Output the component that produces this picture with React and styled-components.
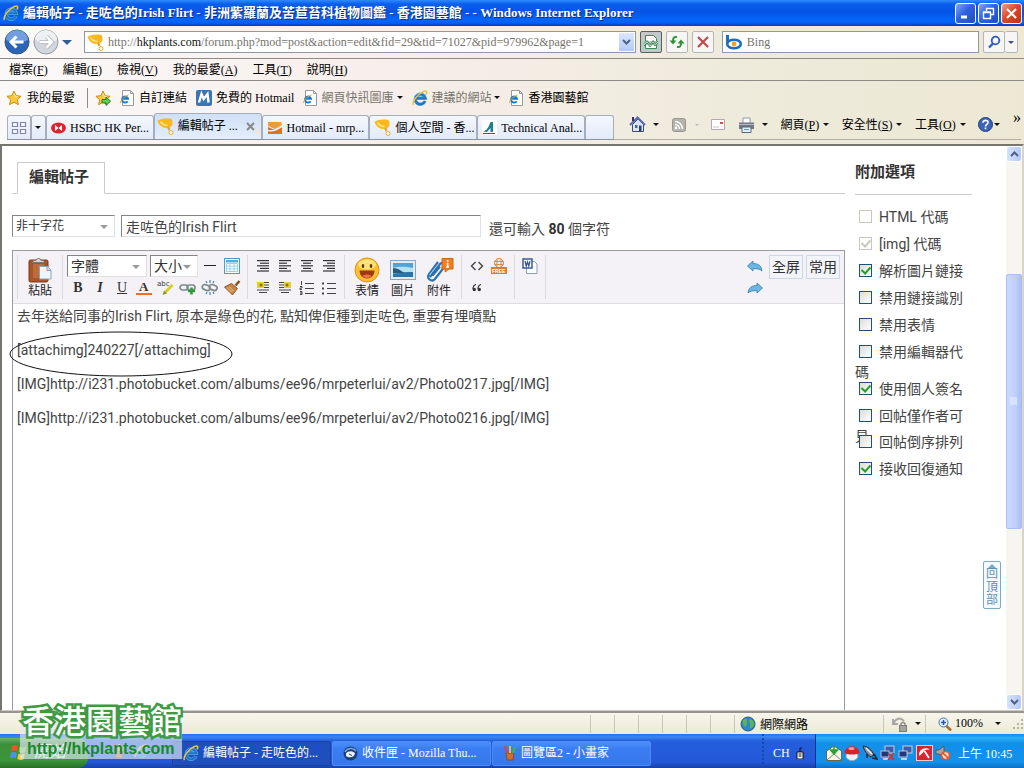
import React from 'react';
import styled, { createGlobalStyle, css } from 'styled-components';

const uiFont = "'Liberation Serif', 'Noto Sans CJK TC', serif";
const pageFont = "Roboto, 'Noto Sans CJK TC', sans-serif";

const GlobalStyle = createGlobalStyle`
  * { box-sizing: border-box; }
  body { margin: 0; font-family: ${uiFont}; font-size: 12px; color: #000; }
  button, input, select, textarea { font: inherit; color: inherit; margin: 0; }
  svg { display: block; flex: none; }
`;

const Desktop = styled.div`
  position: relative;
  min-height: 100vh;
  display: flex;
  flex-direction: column;
  overflow: hidden;
`;

// ---------- title bar ----------
const TitleBar = styled.header`
  height: 26px;
  display: flex;
  align-items: center;
  gap: 4px;
  padding: 0 2px 0 3px;
  background: linear-gradient(180deg, #2f8bff 0, #0b5fec 4px, #0453e4 12px, #0566fb 20px, #0560f3 23px, #0238b4 26px);
`;

const Title = styled.h1`
  flex: 1;
  margin: 0;
  font-size: 13px;
  line-height: 20px;
  font-weight: bold;
  color: #fff;
  text-shadow: 1px 1px 0 #0a2a7a;
  white-space: nowrap;
  overflow: hidden;
`;

const WindowButtons = styled.div`
  display: flex;
  gap: 2px;
`;

const WindowButton = styled.button`
  width: 21px;
  height: 21px;
  padding: 0;
  display: grid;
  place-items: center;
  border: 1px solid #fff;
  border-radius: 3px;
  background: ${props => (props.$close
    ? 'linear-gradient(135deg, #f0a088, #e0482a 45%, #c2300f)'
    : 'linear-gradient(135deg, #7fa8f5, #2f62e0 45%, #1f4bc8)')};
`;

// ---------- navigation ----------
const barBackground = 'linear-gradient(90deg, #fbf9f8 0, #f7efec 35%, #efebdc 70%, #ece8d4 100%)';

const NavBar = styled.nav`
  height: 33px;
  display: flex;
  align-items: center;
  gap: 4px;
  padding: 0 6px 0 4px;
  background: ${barBackground};
  border-bottom: 1px solid #8d8b85;
`;

const RoundButtons = styled.div`
  display: flex;
  align-items: center;
  gap: 3px;
  width: 76px;
`;

const PlainButton = styled.button`
  padding: 0;
  border: 0;
  background: none;
  display: inline-flex;
  align-items: center;
  justify-content: center;
  gap: ${props => props.$gap || 0}px;
  white-space: nowrap;
  line-height: 16px;
  color: ${props => props.$color || 'inherit'};
`;

const FieldBox = styled.div`
  flex: ${props => props.$grow} 1 0;
  min-width: 0;
  height: 22px;
  display: flex;
  align-items: center;
  gap: 4px;
  padding: 0 1px 0 2px;
  margin-left: ${props => props.$before || 0}px;
  background: #fff;
  border: 1px solid #8a99ab;
`;

const AddressText = styled.div`
  flex: 1;
  color: #77736c;
  line-height: 18px;
  white-space: nowrap;
  overflow: hidden;
  b { color: #111; font-weight: normal; }
`;

const SearchInput = styled.input`
  flex: 1;
  min-width: 0;
  border: 0;
  padding: 0;
  background: none;
  outline: 0;
  &::placeholder { color: #77736c; opacity: 1; }
`;

const DropButton = styled(PlainButton)`
  width: 15px;
  height: 18px;
  background: linear-gradient(180deg, #dce7fc, #b3c9f5);
`;

const SquareButton = styled(PlainButton)`
  width: ${props => props.$w || 22}px;
  height: 22px;
  border: 1px solid ${props => (props.$pressed ? '#56605c' : '#b3b6bd')};
  border-radius: 2px;
  background: ${props => (props.$pressed ? '#bccbca' : '#f7f6f4')};
`;

const Joined = styled.div`
  display: flex;
  button + button { border-left: 0; }
`;

const MenuBar = styled.div`
  height: 22px;
  display: flex;
  align-items: center;
  gap: 15px;
  padding: 0 9px;
  background: ${barBackground};
  border-bottom: 1px solid #8d8b85;
`;

const FavoritesBar = styled.div`
  height: 33px;
  display: flex;
  align-items: center;
  gap: 9px;
  padding: 0 6px;
  background: ${barBackground};
`;

const FavoritesSplit = styled.i`
  height: 20px;
  margin: 0 -2px 0 3px;
  border-left: 1px solid #908e88;
`;

// ---------- tabs and commands ----------
const TabBar = styled.div`
  display: flex;
  height: 30px;
  padding: 0 3px 4px 7px;
  background: ${barBackground};
`;

const Tabs = styled.div`
  flex: 1 1 607px;
  min-width: 0;
  display: flex;
  align-items: flex-end;
  border-bottom: 1px solid #8d949e;
`;

const tabEdge = css`
  border: 1px solid #a6aebb;
  border-bottom: 0;
  border-radius: 3px 3px 0 0;
  background: linear-gradient(180deg, #f4f7fd, #e2eafa);
`;

const Tab = styled.button`
  ${tabEdge}
  flex: ${props => (props.$small ? `0 0 ${props.$small}px` : '0 1 108px')};
  min-width: 0;
  height: 24px;
  padding: 0 ${props => (props.$small ? 3 : 4)}px;
  display: flex;
  align-items: center;
  gap: 4px;
  text-align: left;
  white-space: nowrap;
  ${props => props.$active && css`
    height: 26px;
    padding: 0 6px 1px 2px;
    background: linear-gradient(180deg, #cfe0f8, #e4eefb);
  `}
`;

const TabLabel = styled.span`
  flex: 1;
  line-height: 16px;
`;

const Commands = styled.div`
  flex: 0 1 407px;
  display: flex;
  align-items: center;
  justify-content: space-between;
  padding: 0 0 4px 15px;
  border-bottom: 1px solid #b0aea6;
`;

const More = styled.button`
  align-self: flex-start;
  padding: 0;
  border: 0;
  background: none;
  font-size: 16px;
  line-height: 8px;
`;

// ---------- forum page ----------
const Viewport = styled.div`
  flex: 1;
  position: relative;
  display: flex;
  background: #fff;
  border: 2px solid #77756f;
  border-right-color: #d8d5c8;
  border-bottom: 1px solid #d0cdc0;
  font-family: ${pageFont};
  color: #444;
`;

const Page = styled.main`
  flex: 1;
  min-width: 0;
  display: flex;
  gap: 10px;
  padding: 0 34px 0 10px;
`;

const MainColumn = styled.div`
  flex: 1;
  min-width: 0;
  display: flex;
  flex-direction: column;
`;

const PageTabs = styled.div`
  display: flex;
  padding: 16px 0 0 5px;
  background: linear-gradient(#ccc, #ccc) 0 100% / 100% 1px no-repeat;
`;

const PageTab = styled.h2`
  margin: 0;
  padding: 4px 15px 6px 11px;
  border: 1px solid #ccc;
  border-bottom-color: #fff;
  background: #fff;
  font-size: 15px;
  line-height: 20px;
  color: #333;
`;

const TitleRow = styled.div`
  display: flex;
  align-items: center;
  gap: 6px;
  margin: 21px 0 13px;
  font-size: 14px;
`;

const sunken = css`
  border: 1px solid;
  border-color: #848484 #e0e0e0 #e0e0e0 #848484;
  background: #fff;
`;

const SelectWrap = styled.label`
  position: relative;
  display: block;
  width: ${props => props.$w}px;
  svg {
    position: absolute;
    right: 7px;
    top: 10px;
    pointer-events: none;
  }
`;

const Select = styled.select`
  ${sunken}
  appearance: none;
  display: block;
  width: 100%;
  height: 22px;
  padding: 0 3px;
  border-radius: 0;
  font-size: ${props => props.$size}px;
  color: #333;
`;

const SubjectInput = styled.input`
  ${sunken}
  flex: 0 1 360px;
  min-width: 0;
  height: 22px;
  padding: 0 4px;
`;

const Remaining = styled.span`
  padding: 3px 0 0 2px;
  margin-bottom: -3px;
  line-height: 17px;
  b { color: #333; }
`;

const Editor = styled.section`
  flex: 1;
  display: flex;
  flex-direction: column;
  border: 1px solid #9a9aa2;
  border-bottom: 0;
`;

const Toolbar = styled.div`
  display: flex;
  padding: 4px;
  background: #f5f2f7;
  border-bottom: 1px solid #ddd;
`;

const ToolGroup = styled.div`
  display: flex;
  flex-wrap: wrap;
  align-content: flex-start;
  width: ${props => props.$w}px;
  height: 44px;
  padding: 0 4px;
  border-left: 1px solid #dcdae0;
`;

const ToolRow = styled.div`
  display: flex;
  align-items: center;
  height: 22px;
`;

const ToolButton = styled.button`
  width: 22px;
  height: 22px;
  padding: 0;
  border: 0;
  background: none;
  display: grid;
  place-items: center;
  color: #333;
  font-family: 'Liberation Serif', serif;
  font-size: 14px;
  line-height: 16px;
`;

const BigTool = styled.button`
  width: 36px;
  height: 44px;
  padding: 2px 0 0;
  border: 0;
  background: none;
  display: flex;
  flex-direction: column;
  align-items: center;
  font-size: 12px;
  line-height: 16px;
  color: #222;
`;

const Spacer = styled.span`
  width: ${props => props.$w}px;
`;

const ToolEnd = styled.div`
  flex: 1;
  display: flex;
  justify-content: flex-end;
  align-items: flex-start;
  border-left: 1px solid #dcdae0;
`;

const ModeButton = styled.button`
  width: 34px;
  height: 24px;
  margin-left: 3px;
  padding: 0;
  border: 1px solid #c9d9ea;
  background: #f2f4fa;
  font-size: 14px;
  line-height: 18px;
  color: #333;
`;

const TextWrap = styled.div`
  flex: 1;
  position: relative;
  display: flex;
`;

const TextArea = styled.textarea`
  flex: 1;
  border: 0;
  outline: 0;
  resize: none;
  overflow: hidden;
  padding: 4px;
  font-size: 14px;
  line-height: 17px;
  background: #fff;
`;

// hand drawn ring around the attachment code
const Ring = styled.svg`
  position: absolute;
  left: -4px;
  top: 27px;
  pointer-events: none;
`;

const Sidebar = styled.aside`
  width: 117px;
`;

const SideTitle = styled.h2`
  margin: 0;
  padding: 15px 0 11px;
  border-bottom: 1px solid #ccc;
  font-size: 15px;
  line-height: 22px;
  color: #333;
`;

const Options = styled.ul`
  list-style: none;
  margin: 12px 0 0;
  padding: 0;
  font-size: 14px;
  line-height: 20px;
`;

const Option = styled.li`
  margin-bottom: ${props => props.$after}px;
`;

const Check = styled.input`
  appearance: none;
  position: relative;
  z-index: 1;
  width: 13px;
  height: 13px;
  margin: 0 7px 0 4px;
  vertical-align: -1px;
  border: 1px solid #1c5180;
  background: linear-gradient(135deg, #dcdcd7, #fff);
  &:checked::after {
    content: '';
    display: block;
    width: 4px;
    height: 7px;
    margin: 0 auto;
    border: solid #21a121;
    border-width: 0 2px 2px 0;
    transform: rotate(42deg);
  }
  &:disabled { border-color: #cac8bb; background: #fff; }
  &:disabled::after { border-color: #cac8bb; }
`;

const ToTop = styled.a`
  position: absolute;
  right: 21px;
  bottom: 101px;
  width: 18px;
  padding: 2px 0 1px;
  display: flex;
  flex-direction: column;
  align-items: center;
  border: 1px solid #7ba9c8;
  border-radius: 2px;
  background: #f5fafe;
  color: #5b93b8;
  font-size: 12px;
  line-height: 13px;
  text-align: center;
  text-decoration: none;
`;

const ToTopText = styled.span`
  width: 12px;
`;

const Scrollbar = styled.div`
  width: 16px;
  display: flex;
  flex-direction: column;
  background: #f6f5ef;
`;

const ScrollButton = styled.button`
  height: 16px;
  padding: 0;
  display: grid;
  place-items: center;
  border: 1px solid #fff;
  border-radius: 3px;
  background: linear-gradient(90deg, #d6e2fd, #b6caf7);
`;

const ScrollTrack = styled.div`
  flex: 1;
  display: flex;
  flex-direction: column;
`;

const ScrollThumb = styled.div`
  flex: 0 0 48%;
  display: grid;
  place-items: center;
  border: 1px solid #a9bff0;
  border-radius: 2px;
  background: linear-gradient(90deg, #cbdafd, #c0d0fb 60%, #a9bff5);
`;

// ---------- status bar ----------
const StatusBar = styled.footer`
  height: 23px;
  display: flex;
  align-items: center;
  background: linear-gradient(180deg, #f8f6ec, #ece9d8);
  border-top: 2px solid #96948c;
`;

const StatusCell = styled.div`
  display: flex;
  align-items: center;
  gap: ${props => props.$gap || 4}px;
  flex: none;
  width: ${props => props.$w}px;
  height: 18px;
  padding-left: ${props => props.$pad || 0}px;
  border-left: 1px solid #c9c6b8;
`;

// ---------- taskbar ----------
const TaskBar = styled.footer`
  height: 34px;
  display: flex;
  align-items: stretch;
  background: linear-gradient(180deg, #2c6fe8 0, #3b86f2 3px, #245edc 7px, #2359d8 28px, #1941a5 34px);
  color: #fff;
`;

const StartButton = styled.button`
  width: 88px;
  margin-top: 4px;
  padding: 0 0 2px 10px;
  display: flex;
  align-items: center;
  gap: 6px;
  border: 0;
  border-radius: 0 10px 10px 0;
  background: linear-gradient(180deg, #6db465, #3c9038 20%, #3a963a 75%, #2a6f2a);
  color: #fff;
  font-size: 16px;
  line-height: 20px;
  font-style: italic;
`;

const QuickLaunch = styled.div`
  width: 84px;
  display: flex;
  align-items: center;
  justify-content: center;
  gap: 8px;
`;

const Tasks = styled.div`
  flex: 1;
  min-width: 0;
  display: flex;
  align-items: center;
  gap: 1px;
  padding-top: 4px;
`;

const Task = styled.button`
  flex: 0 1 159px;
  min-width: 0;
  height: 25px;
  padding: 0 10px;
  display: flex;
  align-items: center;
  gap: 4px;
  border: 1px solid ${props => (props.$active ? '#1a429e' : '#4d8df8')};
  border-radius: 2px;
  background: ${props => (props.$active ? '#1e4fbc' : 'linear-gradient(180deg, #4c8ffa, #3a7df2 30%, #3877ec)')};
  white-space: nowrap;
  line-height: 16px;
`;

const Language = styled.div`
  width: 53px;
  display: flex;
  align-items: center;
  gap: 6px;
  padding: 4px 0 0 9px;
  border-left: 2px dotted #1846b0;
`;

const Tray = styled.div`
  width: 209px;
  display: flex;
  align-items: center;
  gap: 2px;
  padding: 4px 0 0 10px;
  border-left: 1px solid #10308c;
  background: linear-gradient(180deg, #0c8ce8 0, #2cb0f8 4px, #1290e9 9px, #1390ea 28px, #0f6fc4 34px);
`;

const Clock = styled.time`
  margin-left: 5px;
  white-space: nowrap;
`;

const Watermark = styled.div`
  position: absolute;
  left: 20px;
  bottom: 9px;
  padding: 0 0 1px 2px;
  background: linear-gradient(180deg, transparent 8px, rgba(225, 232, 246, 0.65) 8px);
  pointer-events: none;
`;

const WatermarkName = styled.div`
  font-size: 32px;
  font-weight: 500;
  line-height: 36px;
  color: #fff;
  -webkit-text-stroke: 5px #3f9a43;
  paint-order: stroke fill;
`;

const WatermarkUrl = styled.div`
  padding-left: 5px;
  font-family: 'Liberation Sans', sans-serif;
  font-size: 16px;
  font-weight: bold;
  line-height: 18px;
  color: #168a28;
`;

// ---------- icons ----------
const Svg = ({ w = 16, h = w, box, children }) => (
  <svg width={w} height={h} viewBox={box || `0 0 ${w} ${h}`} fill="none" aria-hidden="true">{children}</svg>
);

const Caret = ({ color = '#111', w = 6, up }) => (
  <Svg w={w} h={w / 2} box="0 0 6 3"><path d={up ? 'M0 3h6L3 0z' : 'M0 0h6L3 3z'} fill={color} /></Svg>
);

const SelectCaret = () => (
  <Svg w={8} h={4}><path d="M0 0h8L4 4z" fill="#999" /></Svg>
);

const Chevron = ({ up, color = '#4d6185' }) => (
  <Svg w={9} h={6}><path d={up ? 'M1 5l3.500-3.500L8 5' : 'M1 1l3.500 3.500L8 1'} stroke={color} strokeWidth="2" /></Svg>
);

const IeIcon = ({ w = 16 }) => (
  <Svg w={w} box="0 0 16 16">
    <path d="M13 11A5 5 0 1 1 13.200 8.200H4.500" stroke="#4fa8ea" strokeWidth="3.400" />
    <path d="M13 11A5 5 0 1 1 13.200 8.200H4.500" stroke="#1f74c4" strokeWidth="2" />
    <path d="M1.500 15C-.5 12 6 3.500 11.500 1.400c3-1.100 4 .4 2.500 3" stroke="#f0c040" strokeWidth="1.600" />
  </Svg>
);

const IePage = () => (
  <Svg w={14} h={16}>
    <path d="M2.500.5h8l3 3v12h-11z" fill="#fff" stroke="#999" />
    <path d="M10.500.5v3h3" stroke="#999" />
    <path d="M7.600 11.200A3 3 0 1 1 8 8.800H2.500" stroke="#1f78c8" strokeWidth="2" />
    <path d="M.6 13C0 11 4 6.500 8.500 5" stroke="#e0a92c" />
  </Svg>
);

const TrophyIcon = () => (
  <Svg w={17} h={17}>
    <path d="M.5 3C4 .5 9 0 14.500 1c2.500 4 .5 8-3 9C7 10.500 2.500 8.500.5 3z" fill="#f9b81c" />
    <path d="M3.500 3.500c2 3 4 4 7 4" stroke="#ffe38a" strokeWidth="1.500" />
    <path d="M11 9l1.500 3" stroke="#e8a020" strokeWidth="2" />
    <circle cx="14" cy="14.500" r="2" fill="#fff" stroke="#f0a81c" />
  </Svg>
);

const BackIcon = () => (
  <Svg w={26}>
    <circle cx="13" cy="13" r="12" fill="#2a65b8" stroke="#38527c" />
    <path d="M2 11a11 10 0 0 1 22 0c-6 3-16 3-22 0z" fill="#6f9fdc" />
    <path d="M12.500 7.500L7 13l5.500 5.500M7 13h12.500" stroke="#fff" strokeWidth="3" />
  </Svg>
);

const ForwardIcon = () => (
  <Svg w={26}>
    <circle cx="13" cy="13" r="12" fill="#d2d6dd" stroke="#959ba5" />
    <path d="M2 11a11 10 0 0 1 22 0c-6 3-16 3-22 0z" fill="#eef0f4" />
    <path d="M13.500 7.500L19 13l-5.500 5.500M19 13H6.500" stroke="#a9adb6" strokeWidth="4" />
    <path d="M13.500 7.500L19 13l-5.500 5.500M19 13H6.500" stroke="#fff" strokeWidth="2.600" />
  </Svg>
);

const CompatIcon = () => (
  <Svg w={16}>
    <path d="M2.500 7V1.500h8l3 3V7M2.500 11v3.500h11V11" fill="#fff" stroke="#3d8a4c" />
    <path d="M1 9.500l3-3 3 4 3-4 2 3 3-2.500M1 12l3-3 3 4 3-4 2 3 3-2.500" stroke="#3d8a4c" />
  </Svg>
);

const RefreshIcon = () => (
  <Svg w={16}>
    <path d="M8 3C5 2.500 4 4 4 7" stroke="#2f9438" strokeWidth="2" />
    <path d="M.5 6.500h7L4 10.500z" fill="#2f9438" />
    <path d="M8 13c3 .5 4-1 4-4" stroke="#2f9438" strokeWidth="2" />
    <path d="M8.500 9.500h7L12 5.500z" fill="#2f9438" />
  </Svg>
);

const StopIcon = () => (
  <Svg w={14}><path d="M2 2l10 10M12 2L2 12" stroke="#c04a48" strokeWidth="2.200" /></Svg>
);

const BingIcon = () => (
  <Svg w={18} h={16}>
    <path d="M2.500 1v9.500" stroke="#1c6fc0" strokeWidth="3" />
    <ellipse cx="9" cy="10" rx="6.800" ry="4.300" fill="#fff" stroke="#1c6fc0" strokeWidth="2.600" />
    <circle cx="9" cy="10" r="2.400" fill="#f0a020" />
  </Svg>
);

const SearchIcon = () => (
  <Svg w={14}>
    <circle cx="8.500" cy="5.500" r="3.800" stroke="#2c5cc5" strokeWidth="1.800" />
    <path d="M6 8.500L2 12.500" stroke="#2c5cc5" strokeWidth="2.400" />
  </Svg>
);

const StarIcon = ({ add }) => (
  <Svg w={16}>
    <path d="M8 1l2.100 4.700 5 .6-3.700 3.400 1 5L8 12.200 3.600 14.700l1-5L.9 6.300l5-.6z" fill="#ffc93a" stroke="#c98a1a" />
    <path d="M8 3.500l1.500 3 2.500.3" stroke="#fff0a8" />
    {add && <path d="M7 9.500h4v-2.500l4.500 4.200-4.500 4.200v-2.500H7z" fill="#5fd04a" stroke="#207a28" />}
  </Svg>
);

const MsnIcon = () => (
  <Svg w={16}>
    <rect width="16" height="16" rx="2" fill="#3a76b4" />
    <path d="M3 12.500L5.500 4l2.200 5L11.500 4l1 8.500" stroke="#fff" strokeWidth="2.400" />
  </Svg>
);

const QuickTabsIcon = () => (
  <Svg w={16} h={14}>
    <path d="M1.500 1.500h5v4h-5zM9.500 1.500h5v4h-5zM1.500 8.500h5v4h-5zM9.500 8.500h5v4h-5z" fill="#f6f8fd" stroke="#7d88a8" strokeWidth="1.200" />
  </Svg>
);

const HsbcIcon = () => (
  <Svg w={15} h={12}>
    <ellipse cx="7.500" cy="6" rx="7.500" ry="5.500" fill="#dd2530" />
    <path d="M4 3v6l3.500-3zM11 3v6L7.500 6z" fill="#fff" />
    <path d="M5 3h5L7.500 5zM5 9h5L7.500 7z" fill="#dd2530" />
  </Svg>
);

const HotmailIcon = () => (
  <Svg w={16} h={14}>
    <path d="M1 1h13l1 3-7 4-7-3z" fill="#f19a3c" />
    <path d="M1 6l7 3 7-4v8H1z" fill="#e2711c" />
    <path d="M0 9.500c5 1.500 9 0 15-4" stroke="#fff" strokeWidth="1.200" />
  </Svg>
);

const ChartIcon = () => (
  <Svg w={15} h={15}>
    <rect width="15" height="15" fill="#fff" />
    <path d="M1 11.500C5 11 7 6 8.500 2H11v10H8.500V8L5 12z" fill="#1f7f8c" />
    <path d="M1 13.500h12" stroke="#2a5a9a" />
  </Svg>
);

const HomeIcon = () => (
  <Svg w={17} h={17}>
    <path d="M3.500 8.500v7h11v-7L9 3z" fill="#dce5f6" stroke="#3e4a78" />
    <path d="M1 9l7.500-7.500L16 9" stroke="#5a6cae" strokeWidth="2" />
    <path d="M3 1h2v4H3z" fill="#3a2a7a" />
    <path d="M6 9h2.500v3H6z" fill="#4a64a8" />
    <path d="M10 9.500h2.500v6H10z" fill="#2f3e70" />
  </Svg>
);

const RssIcon = () => (
  <Svg w={14}>
    <rect x=".5" y=".5" width="13" height="13" rx="2" fill="#b4b2ac" stroke="#98968f" />
    <circle cx="4" cy="10" r="1.400" fill="#fff" />
    <path d="M3 6.500A4.500 4.500 0 0 1 7.500 11M3 3.500A7.500 7.500 0 0 1 10.500 11" stroke="#fff" strokeWidth="1.400" />
  </Svg>
);

const MailIcon = () => (
  <Svg w={14} h={11}>
    <path d="M.5.5h13v10H.5z" fill="#fff" stroke="#b8a8ae" />
    <path d="M9 3h3v2H9z" fill="#d44a50" />
    <path d="M2 8h6" stroke="#c9c3cf" />
  </Svg>
);

const PrinterIcon = () => (
  <Svg w={17} h={16}>
    <path d="M5 6V1h7v5" fill="#fff" stroke="#8a9ab0" />
    <path d="M1 5.500h15V12H1z" fill="#747884" />
    <path d="M1 7.500h15" stroke="#b8bcc6" />
    <path d="M4 10h9v5.500H4z" fill="#e4f0fb" stroke="#5c6678" />
    <path d="M6 12.500h5" stroke="#5a9ad0" />
  </Svg>
);

const HelpIcon = () => (
  <Svg w={15}>
    <circle cx="7.500" cy="7.500" r="7" fill="#3a62b8" stroke="#22407c" />
    <path d="M5 5.800c0-3.200 5-3 5-.2 0 1.800-2.500 1.700-2.500 3.800M7.500 10.500v1.800" stroke="#fff" strokeWidth="1.700" />
  </Svg>
);

const PasteIcon = () => (
  <Svg w={24} h={26}>
    <rect x="1" y="3" width="19" height="22" rx="1.500" fill="#a9552a" stroke="#7d3a18" />
    <path d="M5 7h11v14H5z" fill="#bd6d3d" />
    <path d="M5 5.500h11v-2h-3a2.500 2 0 0 0-5 0H5z" fill="#d8d8d8" stroke="#777" />
    <path d="M11.500 9.500h8l3.500 3.500v9H11.500z" fill="#edf6fc" stroke="#8aa5ba" />
    <path d="M19 9.500v4h4" fill="#c5dcec" stroke="#8aa5ba" />
  </Svg>
);

const SmileIcon = () => (
  <Svg w={26}>
    <circle cx="13" cy="13" r="12" fill="#fcbf2e" stroke="#dc9310" />
    <ellipse cx="13" cy="7.500" rx="9" ry="5" fill="#ffe27a" />
    <ellipse cx="9" cy="9" rx="1.300" ry="2" fill="#5a3208" />
    <ellipse cx="17" cy="9" rx="1.300" ry="2" fill="#5a3208" />
    <path d="M5.500 13.500h15a7.500 8 0 0 1-15 0z" fill="#9c3812" />
    <path d="M8.500 19c2.500-2 6.500-2 9 0-2 2.500-7 2.500-9 0z" fill="#ee7048" />
  </Svg>
);

const PictureIcon = () => (
  <Svg w={26}>
    <rect x=".5" y="3.500" width="25" height="19" fill="#e2ecf4" stroke="#86a8c2" />
    <rect x="3" y="6" width="20" height="14" fill="#4fa3d8" />
    <path d="M3 11c7-2 13-1 20 0v4H3z" fill="#b5e2f1" />
    <path d="M3 11c5 0 8 3 12 5H3z" fill="#27597a" />
    <path d="M3 17c8-1 13-2 20-2v5H3z" fill="#2a74a8" />
  </Svg>
);

const AttachIcon = () => (
  <Svg w={30} h={26}>
    <path d="M6 20L16 7c2-2.500 6 .5 4 3.300L11 22c-3 3.500-9 0-6-5L14 5M8.500 18.500l7.500-9" stroke="#2a71ad" strokeWidth="2.200" />
    <path d="M5.500 18L15 6" stroke="#9cccec" />
    <path d="M18 1.500h11v10.500H25l-4 3 .5-3H18z" fill="#ee7f22" stroke="#d0650e" />
    <path d="M23.600 3v1.600M23.600 5.800V10M22.300 10h2.800" stroke="#fff" strokeWidth="1.600" />
  </Svg>
);

const TableIcon = () => (
  <Svg w={16}>
    <rect x=".5" y=".5" width="15" height="15" fill="#fff" stroke="#3f9fd0" />
    <path d="M2 2h12v2.500H2z" fill="#4fb0de" />
    <path d="M2.500 5.500h11v8h-11zM2.500 8.200h11M2.500 10.800h11M6 5v9M10 5v9" stroke="#9ad4ec" />
  </Svg>
);

const HighlightIcon = () => (
  <Svg w={18} h={16}>
    <text x="0" y="6" fontSize="7" fontFamily="DejaVu Sans" fill="#333">abc</text>
    <path d="M15.500 5L8 12.500" stroke="#d9d01c" strokeWidth="3" />
    <path d="M7 10.500l3 3-4.500 1.500z" fill="#8f9a20" />
  </Svg>
);

const LinkIcon = ({ broken }) => (
  <Svg w={18} h={16}>
    <rect x="1" y="5" width="8" height="5" rx="2.500" stroke="#7c8a8c" strokeWidth="1.700" transform={broken ? 'rotate(20 5 8)' : undefined} />
    <rect x="8" y="5" width="8" height="5" rx="2.500" stroke="#7c8a8c" strokeWidth="1.700" transform={broken ? 'rotate(20 12 8)' : undefined} />
    {broken
      ? <path d="M9 0v3M5 1l1 2M13 1l-1 2M9 12v3M5 14l1-2M13 14l-1-2" stroke="#4a82b8" strokeWidth="1.200" />
      : <path d="M12.500 7.500v7M9 11h7" stroke="#2f9c35" strokeWidth="2.600" />}
  </Svg>
);

const BrushIcon = () => (
  <Svg w={18} h={16}>
    <path d="M16.500 1l-4 4.500" stroke="#8b4f20" strokeWidth="2.500" />
    <path d="M8.500 3.500l6 5-5 6.500L1.500 7z" fill="#c48544" stroke="#8c5a2c" />
    <path d="M4 7.500l5 5M6 6.500l5 5" stroke="#ecc690" />
  </Svg>
);

const alignRows = {
  full: [[2, 12], [5, 9], [2, 12], [5, 9], [2, 12]],
  left: [[2, 12], [2, 8], [2, 12], [2, 8], [2, 12]],
  center: [[2, 12], [4, 8], [2, 12], [4, 8], [2, 12]],
  right: [[2, 12], [6, 8], [2, 12], [6, 8], [2, 12]],
};

const AlignIcon = ({ kind }) => (
  <Svg w={16}>
    {alignRows[kind].map(([x, w], i) => (
      <rect key={i} x={x} y={2 + i * 2.6} width={w} height="1.200" fill="#333" />
    ))}
  </Svg>
);

const FloatIcon = ({ right }) => (
  <Svg w={16}>
    <path d="M2 2.500h12M2 5h12M2 7.500h12M2 10h12M4 12.500h8" stroke="#444" />
    <rect x={right ? 7 : 2} y="2" width="7" height="6" fill="#e4d02a" />
    <circle cx={right ? 10 : 6} cy="5" r="1.500" fill="#8a7410" />
  </Svg>
);

const ListIcon = ({ numbered }) => (
  <Svg w={16}>
    <path d="M6 3.500h9M6 8.500h9M6 13.500h9" stroke="#444" />
    {numbered
      ? <path d="M2.500 1v4M1 6.500h2v1.500H1v1.500h2M1 11.500h2v3H1M1 13h2" stroke="#444" />
      : <path d="M1 2.500h2v2H1zM1 7.500h2v2H1zM1 12.500h2v2H1z" fill="#444" />}
  </Svg>
);

const CodeIcon = () => (
  <Svg w={14}><path d="M5.500 3L1.500 7l4 4M8.500 3l4 4-4 4" stroke="#444" strokeWidth="1.400" /></Svg>
);

const FreeIcon = () => (
  <Svg w={16} h={17}>
    <circle cx="8" cy="5" r="4.500" stroke="#d48a48" />
    <path d="M3.500 3.500h9M3.500 6.500h9M6 1v8M10 1v8" stroke="#d48a48" />
    <rect x="0" y="9" width="16" height="7" fill="#d67e32" />
    <text x="1" y="15" fontSize="5" fontWeight="bold" fontFamily="Liberation Sans" fill="#fff">FREE</text>
  </Svg>
);

const WordIcon = () => (
  <Svg w={16}>
    <path d="M4.500 3.500h8l2.500 2.500v9.500H4.500z" fill="#fff" stroke="#8a9cba" />
    <rect x="1" y="1" width="9" height="9" fill="#fff" stroke="#2d4f9c" strokeWidth="1.400" />
    <path d="M3 3l1.200 5 1.300-4 1.300 4L8 3" stroke="#2d4f9c" strokeWidth="1.200" />
  </Svg>
);

const UndoIcon = ({ redo }) => (
  <Svg w={16} h={12}>
    <path
      d="M6 1v2.500c5 0 8.500 2 9 7.500-2-2-5-2.500-9-2.300V11L.5 6z"
      fill="#6ab8e2"
      stroke="#2f7cae"
      strokeWidth=".8"
      transform={redo ? 'matrix(-1 0 0 1 16 0)' : undefined}
    />
  </Svg>
);

const GlobeIcon = () => (
  <Svg w={16}>
    <circle cx="8" cy="8" r="7" fill="#2f86c8" stroke="#2a5a90" />
    <path d="M3 4c3-2.500 5-1 4 1s1 3-1 5-4-3-3-6zM10 3c2 0 4 3 4 5s-3 5-4 4 1-3 0-5-1-3 0-4z" fill="#5cb84c" />
  </Svg>
);

const LockIcon = () => (
  <Svg w={16}>
    <path d="M1 8C4 2 8 1 12 5M1 3v5h5" stroke="#a8a8a4" strokeWidth="2" />
    <path d="M9 10V8.500a2 2 0 0 1 4 0V10" stroke="#8c8c88" strokeWidth="1.500" />
    <rect x="7.500" y="9.500" width="7" height="6" fill="#a4a4a0" stroke="#7c7c78" />
  </Svg>
);

const ZoomIcon = () => (
  <Svg w={14}>
    <path d="M8 8.500l5 5" stroke="#a86830" strokeWidth="2.500" />
    <circle cx="5.500" cy="5.500" r="4.500" fill="#e3f0fc" stroke="#3f76b8" />
    <path d="M5.500 3v5M3 5.500h5" stroke="#2458b0" strokeWidth="1.500" />
  </Svg>
);

const GripIcon = () => (
  <Svg w={12} h={12}>
    <path d="M9 1h2v2H9zM9 5h2v2H9zM9 9h2v2H9zM5 5h2v2H5zM5 9h2v2H5zM1 9h2v2H1z" fill="#b8b4a2" />
  </Svg>
);

const WindowsIcon = () => (
  <Svg w={18} h={18}>
    <path d="M2 3c2-1.500 4-1.500 6 0L7 8.500c-2-1.500-4-1-6 0z" fill="#e8562a" />
    <path d="M9.500 3.500c2 1.500 4 1.500 6.500 0L15 9c-2 1.500-4 1-6.500 0z" fill="#7cc84a" />
    <path d="M.8 10c2-1.500 4-1.500 6 0l-1 5.500c-2-1.500-4-1-6 0z" fill="#4a92ee" />
    <path d="M8.300 10.500c2 1.500 4 1.500 6.500 0l-1 5.500c-2 1.500-4 1-6.500 0z" fill="#f8c834" />
  </Svg>
);

const BirdIcon = () => (
  <Svg w={15} h={15}>
    <circle cx="7.500" cy="7.500" r="7" fill="#1c3f7c" />
    <path d="M3 7.500c2-3 7-3 9 0-1 4-6 5-9 2.500z" fill="#eef2f8" />
    <path d="M2 6c2-4 8-5 11-1" stroke="#7aa8dc" strokeWidth="1.500" />
    <path d="M6 8l3 1.500" stroke="#1c3f7c" />
  </Svg>
);

const PaintIcon = () => (
  <Svg w={14} h={16}>
    <path d="M3 8h8l-1 7H4z" fill="#c8702c" stroke="#8c4a2a" />
    <path d="M4 8L2 1" stroke="#e0452c" strokeWidth="2" />
    <path d="M7 8V1" stroke="#f2c02c" strokeWidth="2" />
    <path d="M10 8l2-6" stroke="#4fae44" strokeWidth="2" />
  </Svg>
);

const BatteryIcon = () => (
  <Svg w={8} h={12}>
    <path d="M1 5h6v7H1z" fill="#fff" stroke="#111" />
    <path d="M4 1v4M4 1h2M2.500 7h3M2.500 9h3" stroke="#111" />
  </Svg>
);

const TrayMail = () => (
  <Svg w={16}>
    <path d="M.5 6L8 1l7.500 5v9.500H.5z" fill="#f4f4e8" stroke="#5c6c4c" />
    <path d="M1 15l7-6 7 6" stroke="#7c8c6c" />
    <path d="M8 1v5M4.500 5L8 9l3.500-4z" stroke="#28a034" strokeWidth="1.500" fill="#28a034" />
  </Svg>
);

const TrayBall = () => (
  <Svg w={16}>
    <ellipse cx="8" cy="11" rx="6" ry="4.500" fill="#f2f2f2" stroke="#a8a8a8" />
    <path d="M.5 8c1-9 14-9 15 0-4 2-11 2-15 0z" fill="#dc2028" />
    <ellipse cx="7.500" cy="3.500" rx="3" ry="1.500" fill="#fa9a98" />
  </Svg>
);

const TrayRocket = () => (
  <Svg w={16}>
    <path d="M1 1c4 0 9 4 11 9l-3 2C5 10 2 5 1 1z" fill="#8a90a0" stroke="#22262e" />
    <path d="M4 3l6 6" stroke="#e8ecf4" strokeWidth="1.500" />
    <path d="M12 9l3 5-5-1M5 9l0 4" stroke="#22262e" strokeWidth="1.500" />
  </Svg>
);

const TrayNetwork = ({ off }) => (
  <Svg w={16}>
    <rect x="5" y="1" width="9" height="7" fill="#3c5cae" stroke="#c8d0e4" />
    <rect x="1" y="6" width="8" height="6" fill="#22387e" stroke="#b8c2da" />
    <path d="M3 14h6" stroke="#c8d0e4" strokeWidth="2" />
    {off && <path d="M8 8l6 7M14 8l-6 7" stroke="#e02c28" strokeWidth="1.800" />}
  </Svg>
);

const TrayAvira = () => (
  <Svg w={17} h={16}>
    <rect x=".5" y=".5" width="16" height="15" fill="#d62430" stroke="#f6c8c8" />
    <path d="M3.500 11C1.500 5 9 1 14 4.500c-4-.5-6 .5-7 3z" fill="#fff" />
    <path d="M8.500 6l4.500 7" stroke="#fff" strokeWidth="1.800" />
  </Svg>
);

const TraySpeaker = () => (
  <Svg w={16}>
    <path d="M1 5h3l5-4v11L4 9H1z" fill="#aaa6a4" stroke="#5c5452" />
    <circle cx="10.500" cy="10.500" r="4" stroke="#e2562c" strokeWidth="1.700" fill="#f6d8cc" />
    <path d="M8 8l5 5" stroke="#e2562c" strokeWidth="1.700" />
  </Svg>
);

// ---------- data ----------
const menus = [
  ['檔案', 'F'], ['編輯', 'E'], ['檢視', 'V'], ['我的最愛', 'A'], ['工具', 'T'], ['說明', 'H'],
];

const tabs = [
  { label: 'HSBC HK Per...', Icon: HsbcIcon },
  { label: '編輯帖子 ...', Icon: TrophyIcon, active: true },
  { label: 'Hotmail - mrp...', Icon: HotmailIcon },
  { label: '個人空間 - 香...', Icon: TrophyIcon },
  { label: 'Technical Anal...', Icon: ChartIcon },
];

const options = [
  { label: 'HTML 代碼', disabled: true },
  { label: '[img] 代碼', checked: true, disabled: true },
  { label: '解析圖片鏈接', checked: true },
  { label: '禁用鏈接識別' },
  { label: '禁用表情' },
  { label: '禁用編輯器代碼', after: -3 },
  { label: '使用個人簽名', checked: true },
  { label: '回帖僅作者可見', after: -14 },
  { label: '回帖倒序排列' },
  { label: '接收回復通知', checked: true },
];

const message = `去年送給同事的Irish Flirt, 原本是綠色的花, 點知俾佢種到走咗色, 重要有埋噴點

[attachimg]240227[/attachimg]

[IMG]http://i231.photobucket.com/albums/ee96/mrpeterlui/av2/Photo0217.jpg[/IMG]

[IMG]http://i231.photobucket.com/albums/ee96/mrpeterlui/av2/Photo0216.jpg[/IMG]`;

const BrowserTop = () => (
  <>
    <TitleBar>
      <IeIcon />
      <Title>編輯帖子 - 走咗色的Irish Flirt - 非洲紫羅蘭及苦苣苔科植物圖鑑 - 香港園藝館 - - Windows Internet Explorer</Title>
      <WindowButtons>
        <WindowButton aria-label="最小化"><Svg w={13}><path d="M2 10h6" stroke="#fff" strokeWidth="3" /></Svg></WindowButton>
        <WindowButton aria-label="還原">
          <Svg w={13}><path d="M4.500 4V1.500h7v6H9M1.500 5.500h7v6h-7zM1 5h8M4 1.500h8" stroke="#fff" strokeWidth="1.400" /></Svg>
        </WindowButton>
        <WindowButton aria-label="關閉" $close><Svg w={13}><path d="M2 2l9 9M11 2l-9 9" stroke="#fff" strokeWidth="2.200" /></Svg></WindowButton>
      </WindowButtons>
    </TitleBar>
    <NavBar>
      <RoundButtons>
        <PlainButton aria-label="上一頁"><BackIcon /></PlainButton>
        <PlainButton aria-label="下一頁"><ForwardIcon /></PlainButton>
        <PlainButton aria-label="最近的頁面"><Caret color="#2f5f95" w={10} /></PlainButton>
      </RoundButtons>
      <FieldBox $grow={553}>
        <TrophyIcon />
        <AddressText>http://<b>hkplants.com</b>/forum.php?mod=post&amp;action=edit&amp;fid=29&amp;tid=71027&amp;pid=979962&amp;page=1</AddressText>
        <DropButton aria-label="網址清單"><Chevron /></DropButton>
      </FieldBox>
      <SquareButton $pressed aria-label="相容性檢視"><CompatIcon /></SquareButton>
      <SquareButton aria-label="重新整理"><RefreshIcon /></SquareButton>
      <SquareButton aria-label="停止"><StopIcon /></SquareButton>
      <FieldBox $grow={255} $before={4}>
        <BingIcon />
        <SearchInput placeholder="Bing" aria-label="搜尋" />
      </FieldBox>
      <Joined>
        <SquareButton aria-label="搜尋網頁"><SearchIcon /></SquareButton>
        <SquareButton $w={13} aria-label="搜尋選項"><Caret color="#3c4c8c" /></SquareButton>
      </Joined>
    </NavBar>
    <MenuBar>
      {menus.map(([name, key]) => (
        <PlainButton key={key}><span>{name}(<u>{key}</u>)</span></PlainButton>
      ))}
    </MenuBar>
    <FavoritesBar>
      <PlainButton $gap={5}><StarIcon />我的最愛</PlainButton>
      <FavoritesSplit />
      <PlainButton aria-label="加到我的最愛列"><StarIcon add /></PlainButton>
      <PlainButton $gap={5}><IePage />自訂連結</PlainButton>
      <PlainButton $gap={4}><MsnIcon />免費的 Hotmail</PlainButton>
      <PlainButton $gap={4} $color="#77746c"><IePage />網頁快訊圖庫<Caret /></PlainButton>
      <PlainButton $gap={3} $color="#77746c"><IeIcon />建議的網站<Caret /></PlainButton>
      <PlainButton $gap={5}><IePage />香港園藝館</PlainButton>
    </FavoritesBar>
    <TabBar>
      <Tabs>
        <Tab $small={24} aria-label="快速索引標籤"><QuickTabsIcon /></Tab>
        <Tab $small={15} aria-label="索引標籤清單"><Caret /></Tab>
        {tabs.map(({ label, Icon, active }) => (
          <Tab key={label} $active={active}>
            <Icon />
            <TabLabel>{label}</TabLabel>
            {active && <Svg w={9}><path d="M1 1l7 7M8 1L1 8" stroke="#888" strokeWidth="2" /></Svg>}
          </Tab>
        ))}
        <Tab $small={29} aria-label="新索引標籤" />
      </Tabs>
      <Commands>
        <PlainButton $gap={7} aria-label="首頁"><HomeIcon /><Caret /></PlainButton>
        <PlainButton $gap={9} aria-label="摘要"><RssIcon /><Caret color="#bbb" w={4} /></PlainButton>
        <PlainButton aria-label="讀取郵件"><MailIcon /></PlainButton>
        <PlainButton $gap={7} aria-label="列印"><PrinterIcon /><Caret /></PlainButton>
        <PlainButton $gap={4}><span>網頁(<u>P</u>)</span><Caret /></PlainButton>
        <PlainButton $gap={4}><span>安全性(<u>S</u>)</span><Caret /></PlainButton>
        <PlainButton $gap={4}><span>工具(<u>O</u>)</span><Caret /></PlainButton>
        <PlainButton $gap={1} aria-label="說明"><HelpIcon /><Caret /></PlainButton>
        <More aria-label="更多">»</More>
      </Commands>
    </TabBar>
  </>
);

const EditorToolbar = () => (
  <Toolbar>
    <ToolGroup $w={45}>
      <BigTool><PasteIcon />粘貼</BigTool>
    </ToolGroup>
    <ToolGroup $w={185}>
      <ToolRow>
        <SelectWrap $w={80}>
          <Select $size={14} aria-label="字體"><option>字體</option></Select>
          <SelectCaret />
        </SelectWrap>
        <Spacer $w={3} />
        <SelectWrap $w={48}>
          <Select $size={14} aria-label="大小"><option>大小</option></Select>
          <SelectCaret />
        </SelectWrap>
        <Spacer $w={1} />
        <ToolButton aria-label="分隔線"><Svg w={12} h={2}><path d="M0 0h12v1H0z" fill="#222" /></Svg></ToolButton>
        <ToolButton aria-label="表格"><TableIcon /></ToolButton>
      </ToolRow>
      <ToolRow>
        <ToolButton><b>B</b></ToolButton>
        <ToolButton><b><i>I</i></b></ToolButton>
        <ToolButton><u>U</u></ToolButton>
        <ToolButton aria-label="文字顏色">
          <Svg w={16}>
            <path d="M0 13h16v2H0z" fill="#e8702c" />
            <text x="3" y="11" fontSize="13" fontWeight="bold" fontFamily="Liberation Serif" fill="#333">A</text>
          </Svg>
        </ToolButton>
        <ToolButton aria-label="背景色"><HighlightIcon /></ToolButton>
        <ToolButton aria-label="連結"><LinkIcon /></ToolButton>
        <ToolButton aria-label="移除連結"><LinkIcon broken /></ToolButton>
        <ToolButton aria-label="清除格式"><BrushIcon /></ToolButton>
      </ToolRow>
    </ToolGroup>
    <ToolGroup $w={97}>
      {Object.keys(alignRows).map(kind => (
        <ToolButton key={kind} aria-label={kind}><AlignIcon kind={kind} /></ToolButton>
      ))}
      <ToolButton aria-label="左浮動"><FloatIcon /></ToolButton>
      <ToolButton aria-label="右浮動"><FloatIcon right /></ToolButton>
      <ToolButton aria-label="編號清單"><ListIcon numbered /></ToolButton>
      <ToolButton aria-label="項目清單"><ListIcon /></ToolButton>
    </ToolGroup>
    <ToolGroup $w={117}>
      <BigTool><SmileIcon />表情</BigTool>
      <BigTool><PictureIcon />圖片</BigTool>
      <BigTool><AttachIcon />附件</BigTool>
    </ToolGroup>
    <ToolGroup $w={53}>
      <ToolButton aria-label="代碼"><CodeIcon /></ToolButton>
      <ToolButton aria-label="免費資訊"><FreeIcon /></ToolButton>
      <ToolButton aria-label="引用">
        <Svg w={10} h={8}>
          <path d="M4 .5C2 1 1 2.500 1 5M9 .5C7 1 6 2.500 6 5" stroke="#333" strokeWidth="1.200" />
          <circle cx="2.300" cy="5.500" r="1.700" fill="#333" />
          <circle cx="7.300" cy="5.500" r="1.700" fill="#333" />
        </Svg>
      </ToolButton>
    </ToolGroup>
    <ToolGroup $w={31}>
      <ToolButton aria-label="Word"><WordIcon /></ToolButton>
    </ToolGroup>
    <ToolEnd>
      <div>
        <ToolButton aria-label="復原"><UndoIcon /></ToolButton>
        <ToolButton aria-label="重做"><UndoIcon redo /></ToolButton>
      </div>
      <ModeButton>全屏</ModeButton>
      <ModeButton>常用</ModeButton>
    </ToolEnd>
  </Toolbar>
);

const ForumPage = () => (
  <Viewport>
    <Page>
      <MainColumn>
        <PageTabs><PageTab>編輯帖子</PageTab></PageTabs>
        <TitleRow>
          <SelectWrap $w={103}>
            <Select $size={12} aria-label="分類"><option>非十字花</option></Select>
            <SelectCaret />
          </SelectWrap>
          <SubjectInput defaultValue="走咗色的Irish Flirt" aria-label="標題" />
          <Remaining>還可輸入 <b>80</b> 個字符</Remaining>
        </TitleRow>
        <Editor>
          <EditorToolbar />
          <TextWrap>
            <TextArea defaultValue={message} spellCheck={false} aria-label="內容" />
            <Ring width="225" height="46" viewBox="0 0 225 46" fill="none">
              <ellipse cx="112" cy="23" rx="111" ry="22" stroke="#111" />
            </Ring>
          </TextWrap>
        </Editor>
      </MainColumn>
      <Sidebar>
        <SideTitle>附加選項</SideTitle>
        <Options>
          {options.map(({ label, checked, disabled, after = 7 }) => (
            <Option key={label} $after={after}>
              <label>
                <Check type="checkbox" defaultChecked={checked} disabled={disabled} />
                {label}
              </label>
            </Option>
          ))}
        </Options>
      </Sidebar>
    </Page>
    <ToTop href="#top"><Caret color="#7ba9c8" w={8} up /><ToTopText>回頂部</ToTopText></ToTop>
    <Scrollbar>
      <ScrollButton aria-label="向上"><Chevron up /></ScrollButton>
      <ScrollTrack>
        <Spacer style={{ height: '21%' }} />
        <ScrollThumb><Svg w={8} h={8}><path d="M0 1h7M0 3h7M0 5h7M0 7h7" stroke="#eef4fe" /></Svg></ScrollThumb>
      </ScrollTrack>
      <ScrollButton aria-label="向下"><Chevron /></ScrollButton>
    </Scrollbar>
  </Viewport>
);

const Status = () => (
  <StatusBar>
    <Spacer style={{ flex: 1 }} />
    {[0, 1, 2, 3, 4, 5].map(i => <StatusCell key={i} $w={24} />)}
    <StatusCell $w={149} $pad={5}><GlobeIcon />網際網路</StatusCell>
    <StatusCell $w={42} $pad={8} $gap={7}><LockIcon /><Caret /></StatusCell>
    <StatusCell $w={99} $pad={12} $gap={3}>
      <ZoomIcon />100%
      <Spacer $w={6} />
      <Caret />
      <Spacer $w={6} />
      <GripIcon />
    </StatusCell>
  </StatusBar>
);

const Taskbar = () => (
  <TaskBar>
    <StartButton><WindowsIcon />開始</StartButton>
    <QuickLaunch><PaintIcon /><IeIcon w={14} /></QuickLaunch>
    <Tasks>
      <Task $active><IeIcon />編輯帖子 - 走咗色的...</Task>
      <Task><BirdIcon />收件匣 - Mozilla Thu...</Task>
      <Task><PaintIcon />圖覽區2 - 小畫家</Task>
    </Tasks>
    <Language>CH<BatteryIcon /></Language>
    <Tray>
      <TrayMail /><TrayBall /><TrayRocket /><TrayNetwork off /><TrayNetwork /><TrayAvira /><TraySpeaker />
      <Clock>上午 10:45</Clock>
    </Tray>
  </TaskBar>
);

const App = () => (
  <Desktop>
    <GlobalStyle />
    <BrowserTop />
    <ForumPage />
    <Status />
    <Taskbar />
    <Watermark>
      <WatermarkName>香港園藝館</WatermarkName>
      <WatermarkUrl>http://hkplants.com</WatermarkUrl>
    </Watermark>
  </Desktop>
);

export default App;
